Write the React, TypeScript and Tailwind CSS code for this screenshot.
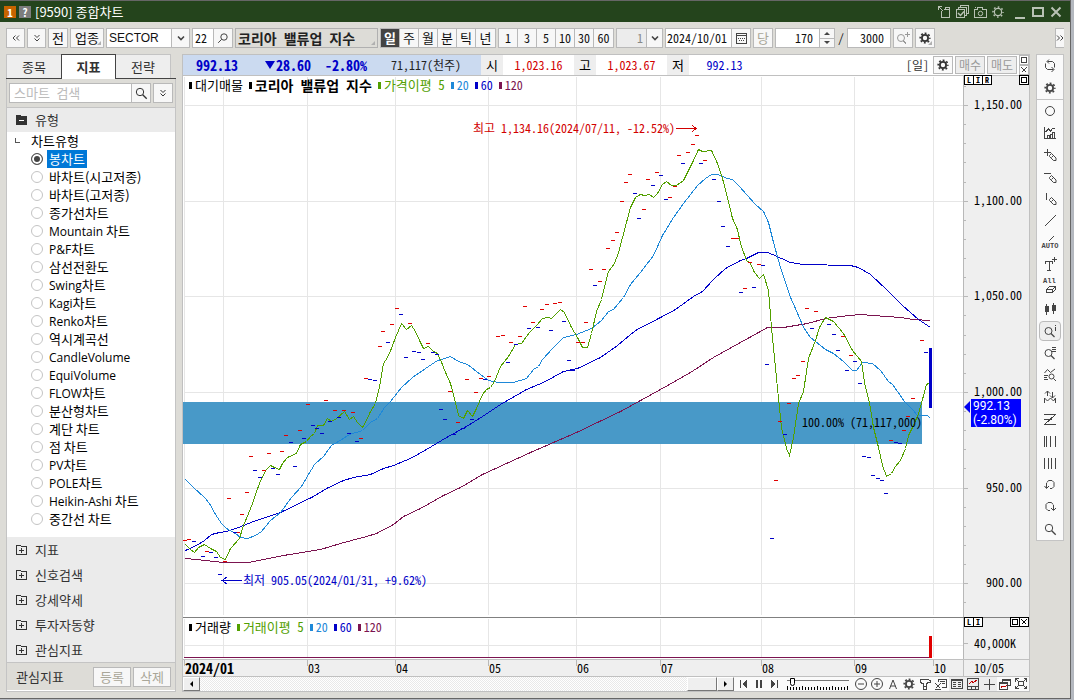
import { useState } from 'react';
import type { ReactNode } from 'react';
import clsx from 'clsx';

type Point = [number, number];

const CHART_TYPES = [
  '봉차트',
  '바차트(시고저종)',
  '바차트(고저종)',
  '종가선차트',
  'Mountain 차트',
  'P&F차트',
  '삼선전환도',
  'Swing차트',
  'Kagi차트',
  'Renko차트',
  '역시계곡선',
  'CandleVolume',
  'EquiVolume',
  'FLOW차트',
  '분산형차트',
  '계단 차트',
  '점 차트',
  'PV차트',
  'POLE차트',
  'Heikin-Ashi 차트',
  '중간선 차트',
];

const GROUPS = ['지표', '신호검색', '강세약세', '투자자동향', '관심지표'];

// Plot area of the price pane, in chart units
const LEFT = 183;
const TOP = 76;
const WIDTH = 780;
const HEIGHT = 541;

const MONTHS = [
  { label: '2024/01', x: 184 },
  { label: '', x: 223 },
  { label: '03', x: 307 },
  { label: '04', x: 395 },
  { label: '05', x: 488 },
  { label: '06', x: 576 },
  { label: '07', x: 660 },
  { label: '08', x: 761 },
  { label: '09', x: 854 },
  { label: '10', x: 933 },
];

const PRICES = [
  { label: '1,150.00', y: 105 },
  { label: '1,100.00', y: 201 },
  { label: '1,050.00', y: 296 },
  { label: '1,000.00', y: 392 },
  { label: '950.00', y: 488 },
  { label: '900.00', y: 583 },
];

const MA5: Point[] = [
  [185, 544], [190, 549], [194, 552], [198, 547], [204, 544], [210, 548], [216, 551], [220, 557], [225, 559],
  [230, 548], [239, 538], [243, 525], [248, 513], [252, 503], [256, 491], [261, 478], [266, 469], [270, 465],
  [274, 467], [279, 469], [282, 463], [287, 457], [296, 453], [300, 444], [306, 441], [310, 436], [314, 433],
  [317, 425], [323, 425], [327, 418], [331, 421], [336, 418], [344, 411], [349, 419], [353, 416], [357, 422],
  [362, 427], [366, 420], [370, 411], [375, 403], [379, 387], [383, 363], [387, 357], [391, 348], [395, 337],
  [401, 323], [406, 329], [411, 325], [415, 331], [419, 340], [423, 348], [428, 346], [433, 351], [436, 352],
  [440, 359], [445, 372], [450, 383], [455, 402], [458, 415], [463, 418], [467, 410], [472, 416], [476, 408],
  [482, 394], [486, 389], [490, 387], [494, 381], [500, 366], [508, 356], [515, 344], [521, 343], [529, 332],
  [537, 324], [542, 318], [548, 317], [551, 318], [560, 309], [564, 312], [571, 327], [577, 337], [582, 347],
  [587, 347], [591, 333], [596, 311], [601, 299], [608, 271], [614, 263], [618, 252], [622, 237], [626, 222],
  [630, 207], [635, 197], [640, 194], [644, 195], [649, 194], [653, 197], [657, 193], [662, 184], [666, 181],
  [671, 185], [676, 185], [683, 180], [688, 170], [693, 160], [698, 149], [702, 151], [711, 150], [717, 163],
  [722, 178], [727, 197], [732, 218], [737, 229], [740, 243], [746, 260], [750, 263], [754, 272], [759, 278],
  [763, 274], [768, 290], [771, 327], [777, 388], [781, 427], [786, 448], [789, 455], [793, 437], [798, 403],
  [803, 391], [808, 358], [815, 340], [819, 327], [825, 317], [833, 321], [843, 333], [852, 350], [861, 361],
  [864, 382], [869, 402], [873, 427], [878, 447], [882, 465], [886, 476], [891, 473], [895, 466], [900, 460],
  [905, 448], [908, 435], [913, 425], [918, 413], [922, 399], [926, 384], [930, 382],
];

const MA20: Point[] = [
  [185, 479], [193, 487], [204, 497], [209, 503], [215, 514], [221, 523], [226, 528], [235, 533], [240, 537],
  [247, 538], [255, 535], [261, 531], [270, 520], [280, 512], [291, 497], [301, 486], [308, 474], [314, 464],
  [323, 456], [331, 445], [338, 441], [349, 434], [362, 430], [370, 422], [377, 418], [384, 407], [390, 401],
  [401, 387], [412, 377], [428, 366], [437, 360], [441, 359], [450, 356], [458, 361], [467, 364], [480, 374],
  [488, 380], [498, 382], [513, 382], [526, 378], [533, 369], [538, 366], [542, 359], [553, 347], [563, 337],
  [576, 334], [591, 328], [601, 320], [608, 311], [613, 309], [623, 297], [630, 284], [640, 272], [653, 255],
  [662, 235], [673, 217], [683, 203], [697, 185], [705, 178], [711, 174], [717, 174], [727, 178], [732, 179],
  [739, 186], [746, 194], [755, 204], [763, 211], [768, 222], [773, 242], [780, 267], [790, 297], [795, 308],
  [803, 327], [810, 337], [815, 341], [825, 349], [833, 353], [843, 361], [852, 370], [856, 370], [862, 362],
  [872, 363], [880, 370], [888, 381], [892, 384], [897, 391], [904, 401], [912, 409], [917, 415], [927, 415],
  [930, 418],
];

const MA60: Point[] = [
  [185, 550], [196, 545], [204, 540], [211, 534], [219, 532], [226, 531], [238, 527], [253, 521], [280, 512],
  [313, 496], [326, 488], [343, 480], [353, 477], [370, 474], [383, 468], [393, 465], [410, 458], [426, 449],
  [446, 437], [466, 426], [482, 416], [500, 404], [526, 389], [543, 382], [563, 371], [577, 368], [600, 357],
  [617, 345], [635, 330], [660, 317], [675, 309], [693, 296], [702, 291], [713, 279], [725, 268], [740, 260],
  [746, 258], [758, 252], [767, 252], [772, 254], [790, 262], [803, 264], [850, 265], [858, 267], [870, 274],
  [887, 290], [902, 305], [918, 319], [930, 327],
];

const MA120: Point[] = [
  [185, 558], [205, 560], [223, 562], [248, 562], [263, 559], [283, 555], [320, 549], [340, 543], [366, 536],
  [376, 533], [393, 524], [403, 516], [420, 508], [443, 495], [460, 487], [482, 474], [530, 452], [576, 432],
  [620, 411], [660, 389], [690, 372], [713, 357], [740, 342], [767, 327], [783, 327], [807, 323], [825, 318],
  [840, 316], [860, 314], [873, 315], [900, 317], [913, 319], [930, 320],
];

const UP: Point[] = [
  [185, 540], [189, 539], [207, 551], [225, 561], [229, 498], [238, 532], [242, 514], [247, 492], [251, 456],
  [269, 453], [264, 470], [282, 451], [286, 435], [300, 430], [308, 404], [326, 400], [335, 410], [344, 410],
  [353, 412], [361, 438], [366, 378], [450, 391], [458, 422], [467, 379], [476, 392], [481, 378], [380, 346],
  [383, 331], [392, 324], [397, 308], [410, 323], [428, 343], [489, 376], [498, 336], [503, 335], [511, 342],
  [520, 336], [525, 306], [533, 322], [542, 309], [547, 304], [555, 303], [560, 302], [578, 342], [583, 342],
  [586, 322], [591, 269], [600, 281], [604, 269], [608, 248], [613, 240], [617, 232], [622, 201], [626, 182],
  [630, 174], [644, 209], [648, 179], [657, 172], [670, 197], [675, 186], [679, 155], [688, 152], [693, 144],
  [697, 135], [705, 160], [733, 238], [737, 238], [745, 288], [750, 262], [759, 264], [807, 308], [816, 311],
  [803, 361], [798, 375], [794, 378], [843, 336], [851, 355], [922, 340], [780, 421], [789, 403], [776, 480],
  [891, 440], [904, 430], [908, 416], [913, 398],
];

const DOWN: Point[] = [
  [194, 541], [203, 556], [211, 552], [216, 557], [220, 574], [235, 532], [255, 470], [260, 477], [273, 468],
  [278, 474], [291, 442], [295, 466], [304, 438], [313, 425], [317, 428], [322, 433], [330, 421], [339, 417],
  [349, 433], [357, 441], [370, 379], [375, 380], [441, 409], [445, 419], [454, 434], [463, 428], [472, 419],
  [388, 342], [401, 314], [406, 357], [414, 351], [419, 352], [423, 359], [433, 352], [437, 354], [485, 379],
  [508, 362], [516, 344], [529, 328], [538, 327], [551, 330], [564, 321], [569, 360], [573, 370], [595, 285],
  [635, 193], [639, 218], [653, 185], [661, 175], [666, 199], [683, 163], [701, 163], [714, 179], [719, 201],
  [723, 226], [728, 246], [741, 292], [754, 287], [763, 265], [767, 364], [812, 328], [829, 324], [834, 334],
  [838, 350], [847, 370], [855, 361], [860, 383], [926, 352], [772, 538], [785, 434], [864, 456], [869, 457],
  [873, 475], [878, 478], [882, 480], [886, 493], [896, 442], [900, 443],
];

const toLine = (points: Point[]) => points.map(([x, y]) => `${x + 0.5},${y + 0.5}`).join(' ');
const toDashes = (points: Point[]) => points.map(([x, y]) => `M${x - 2} ${y + 0.5}h4`).join('');
const left = (x: number) => `${((x - LEFT) / WIDTH) * 100}%`;
const top = (y: number) => `${((y - TOP) / HEIGHT) * 100}%`;

function Icon({ children, smooth }: { children: ReactNode; smooth?: boolean }) {
  return (
    <svg
      viewBox="0 0 16 16"
      className="h-4 w-4 shrink-0"
      fill="none"
      stroke="currentColor"
      strokeWidth="1"
      shapeRendering={smooth ? 'geometricPrecision' : 'crispEdges'}
      aria-hidden="true"
    >
      {children}
    </svg>
  );
}

function GearIcon() {
  return (
    <Icon smooth>
      <circle cx="8" cy="8" r="3.1" strokeWidth="1.8" />
      <circle cx="8" cy="8" r="4.8" strokeWidth="1.6" strokeDasharray="1.9 1.87" strokeDashoffset="0.95" />
    </Icon>
  );
}

function SearchIcon() {
  return (
    <Icon smooth>
      <circle cx="7" cy="7" r="3.7" />
      <path d="M9.7 9.7l4 4" strokeWidth="1.3" />
    </Icon>
  );
}

function ChevronIcon() {
  return (
    <Icon smooth>
      <path d="M5 6.5l3 3 3-3" strokeWidth="1.6" />
    </Icon>
  );
}

const Lens = () => (
  <g shapeRendering="geometricPrecision">
    <circle cx="6.5" cy="8" r="3.5" />
    <path d="M9 10.5l3.5 3.5" strokeWidth="1.3" />
  </g>
);

const Pencil = () => (
  <path d="M7.5 8.5l2-2 4.5 4.5v2.5h-2.5l-4-4v-1zM9.5 10.5l2-2" shapeRendering="geometricPrecision" />
);

const TOOLS: { name: string; icon: ReactNode }[] = [
  {
    name: '새로고침',
    icon: (
      <path
        d="M5.5 3.5h5l2 2v4M3.5 5.5v4l2 2h6M7 1.5l-2 2 2 2M9.5 9l2.5 2.5-2.5 2.5"
        shapeRendering="geometricPrecision"
      />
    ),
  },
  { name: '설정', icon: null },
  { name: '원', icon: <circle cx="8" cy="8" r="4.5" shapeRendering="geometricPrecision" /> },
  {
    name: '지표 차트',
    icon: <path d="M2.5 2v11.5h11M5.5 13v-3h2v3M8.5 13V9.5h1M10.5 13V7.5h2V13M3.5 7l3-3 2 2 2.5-3 2 1" />,
  },
  { name: '십자 그리기', icon: <><path d="M5.5 2v7M2 5.5h7" /><Pencil /></> },
  { name: '수평선 그리기', icon: <><path d="M2 4.5h7" /><Pencil /></> },
  { name: '수직선 그리기', icon: <><path d="M4.5 2v7" /><Pencil /></> },
  { name: '추세선', icon: <path d="M2.5 13.5l11-11" /> },
  { name: '자동 추세선', icon: <path d="M6.5 6.5l5-5" /> },
  { name: '문자', icon: <path d="M3.5 7V4.5h7V7M7 4.5v9M5 13.5h4M12.5 0v5M10 2.5h5" /> },
  { name: '전체 지우기', icon: <path d="M4.5 13.5v-3l3-3h6v3l-3 3h-6zM4.5 10.5h6l3-3M10.5 10.5v3" /> },
  {
    name: '봉 모양',
    icon: (
      <>
        <path d="M4.5 3v11M11.5 2v11" />
        <path d="M3 5h4v6H3zM10 4h4v6h-4z" fill="currentColor" stroke="none" />
      </>
    ),
  },
  { name: '정보 돋보기', icon: <><Lens /><path d="M13.5 2v1M13.5 4v4" /></> },
  { name: '목록 돋보기', icon: <><Lens /><path d="M10 2.5h4M10 4.5h4M10 6.5h4" /></> },
  {
    name: '패턴 검색',
    icon: (
      <g shapeRendering="geometricPrecision">
        <path d="M2.5 6l3-3.5 3 3L13 2M2 8.5h4M2 10.5h3M2 12.5h4M11.5 11.5l2.5 2.5" />
        <circle cx="9.5" cy="9.5" r="2.5" />
      </g>
    ),
  },
  {
    name: '반전',
    icon: (
      <path
        d="M2.5 14V9l3 3 3-3 3 3 2-3v5M5.5 7V2M3 4.5L5.5 2 8 4.5M10.5 3v6M8 6.5L10.5 9 13 6.5"
        shapeRendering="geometricPrecision"
      />
    ),
  },
  { name: '지그재그', icon: <path d="M2 3.5h12M2 13.5h12M2 8.5h8M3 13l10-9" /> },
  { name: '간격선', icon: <path d="M2.5 2.5v11M4.5 2.5v11M8.5 2.5v11M13.5 2.5v11" /> },
  { name: '등간격선', icon: <path d="M2.5 2.5v11M6.5 2.5v11M9.5 2.5v11M13.5 2.5v11" /> },
  {
    name: '되돌리기',
    icon: <path d="M5 5.5l1.5-2h3.5l2 2v4l-2 2H8M4.5 6v5M2.5 9l2 2.5L7 9" shapeRendering="geometricPrecision" />,
  },
  {
    name: '다시하기',
    icon: <path d="M11 5.5l-1.5-2H6l-2 2v4l2 2h2M11.5 6v5M9 9l2.5 2.5L14 9" shapeRendering="geometricPrecision" />,
  },
  { name: '돋보기', icon: null },
];

const BOTTOM_TOOLS: { name: string; icon: ReactNode; on?: boolean }[] = [
  { name: '축소', icon: <g shapeRendering="geometricPrecision"><circle cx="8" cy="8" r="5.5" /><path d="M5 8h6" /></g> },
  { name: '확대', icon: <g shapeRendering="geometricPrecision"><circle cx="8" cy="8" r="5.5" /><path d="M5 8h6M8 5v6" /></g> },
  { name: '글자', icon: <path d="M4.5 13l3.5-9 3.5 9M5.5 10h5" shapeRendering="geometricPrecision" /> },
  { name: '설정', icon: null },
  { name: '망치', icon: <path d="M3.5 6.5v-3h8l2 1.5v1.5h-3v1h-1v6h-3v-6h-2v-1zM6.5 10.5h3" /> },
  {
    name: '데이터 저장',
    icon: <path d="M5.5 6V3.5h8v8h-5M7 5.5h5M9 7.5h3M2.5 7.5l5 5M7.5 7.5l-5 5M2 13.5h6" />,
  },
  {
    name: '표 보기',
    icon: <path d="M2.5 3.5h11v9h-11zM2.5 4.5h11M4 6.5h3M4 8.5h3M4 10.5h3M9 6.5h3M9 8.5h3M9 10.5h3" />,
    on: true,
  },
  {
    name: '분할 차트',
    icon: (
      <>
        <path d="M2.5 2.5h11v11h-11zM2.5 10.5h11M6.5 11v2M10.5 11v2" />
        <path d="M3.5 8.5l3-3 2 1 4-3" stroke="#c00000" />
      </>
    ),
    on: true,
  },
  { name: '십자선', icon: <path d="M8.5 3v11M3 8.5h11" />, on: true },
  {
    name: '겹쳐 보기',
    icon: (
      <>
        <path d="M5.5 6.5v-3h8v6h-3M5.5 4.5h8M2.5 6.5h8v7h-8zM2.5 7.5h8" />
        <path d="M4 11.5l2-1.5 2 1 1.5-1.5" stroke="#c00000" />
      </>
    ),
  },
  {
    name: '전체 화면',
    icon: (
      <path d="M2.5 5.5v-3h3M10.5 2.5h3v3M13.5 9.5v3h-3M5.5 12.5h-3v-3M5.5 5.5h5v4h-5zM3 3l2 2M13 3l-2 2M3 12l2-2M13 12l-2-2" />
    ),
  },
];

const Double = ({ dir }: { dir: 'left' | 'down' | 'right' }) => (
  <Icon smooth>
    {dir === 'left' && <path d="M7.5 5.5L5 8l2.5 2.5M11 5.5L8.5 8l2.5 2.5" />}
    {dir === 'right' && <path d="M5 5.5L7.5 8 5 10.5M8.5 5.5L11 8l-2.5 2.5" />}
    {dir === 'down' && <path d="M5.5 5L8 7.5 10.5 5M5.5 8.5L8 11l2.5-2.5" />}
  </Icon>
);

function BarButton({ label, className, children }: { label?: string; className?: string; children: ReactNode }) {
  return (
    <button
      type="button"
      aria-label={label}
      className={clsx(
        'relative flex h-5 shrink-0 items-center justify-center border border-[#b9b9b9] bg-[#f7f7f7]',
        className,
      )}
    >
      {children}
    </button>
  );
}

const Corner = () => (
  <span className="absolute right-0.5 bottom-0.5 border-b-4 border-l-4 border-b-[#b0b0b0] border-l-transparent" />
);

function TitleBar() {
  return (
    <header className="flex h-[21px] items-center bg-[#24441c] pr-1.5 pl-1 text-white">
      <span className="flex h-3 w-3 items-center justify-center bg-[#c86400] text-[11px] leading-3 font-bold">1</span>
      <span className="ml-[3px] flex h-3 w-3 items-center justify-center bg-[#7d7d7d] text-[11px] leading-3 font-bold">
        ?
      </span>
      <h1 className="ml-1 flex-1 font-['Noto_Sans_CJK_KR',sans-serif] text-[13px] leading-4">[9590] 종합차트</h1>
      <div className="flex items-center gap-0.5 text-[#b9c2b5]">
        <button type="button" aria-label="분리">
          <Icon>
            <path d="M5.5 7v6.5h8v-8H8M9.5 5V3.5h4v2M2 2.5h4M2.5 2v4M3 3l4 4" />
          </Icon>
        </button>
        <button type="button" aria-label="체크">
          <Icon>
            <path d="M2.5 5.5h8v8h-8zM4.5 5V3.5h8v8H11M6.5 3V1.5h8v8H13" />
            <path d="M4 9l2.5 2.5 3.5-4" strokeWidth="1.5" shapeRendering="geometricPrecision" />
          </Icon>
        </button>
        <button type="button" aria-label="화면 저장">
          <Icon>
            <path d="M2.5 5.5h3v-2h5v2h4v8h-12zM3 3.5h1" />
            <circle cx="8.5" cy="9.5" r="2.2" shapeRendering="geometricPrecision" />
          </Icon>
        </button>
        <button type="button" aria-label="환경설정">
          <Icon smooth>
            <circle cx="8" cy="8" r="3.6" strokeWidth="1.2" />
            <circle cx="8" cy="8" r="5" strokeWidth="1.6" strokeDasharray="1.6 2.32" strokeDashoffset="0.8" />
          </Icon>
        </button>
        <button type="button" aria-label="최소화" className="ml-1">
          <Icon>
            <path d="M3 14h10" strokeWidth="2" />
          </Icon>
        </button>
        <button type="button" aria-label="최대화">
          <Icon>
            <path d="M3 4h10v8H3z" strokeWidth="2" />
          </Icon>
        </button>
        <button type="button" aria-label="닫기">
          <Icon smooth>
            <path d="M3.5 3.5l9 9M12.5 3.5l-9 9" strokeWidth="2" />
          </Icon>
        </button>
      </div>
    </header>
  );
}

function Toolbar() {
  const [period, setPeriod] = useState('일');

  return (
    <div className="flex items-center gap-0.5 px-1.5 py-1.5 text-[12px] leading-4 text-[#111]">
      <BarButton label="이전" className="w-[19px] text-[#444]">
        <Double dir="left" />
      </BarButton>
      <BarButton label="펼치기" className="w-[19px] text-[#444]">
        <Double dir="down" />
      </BarButton>
      <BarButton className="w-5 text-[13px]">전</BarButton>
      <BarButton className="w-[34px] text-[13px]">
        업종
        <Corner />
      </BarButton>
      <div className="relative flex h-5 w-[84px] shrink-0 border border-[#b9b9b9] bg-white">
        <select
          aria-label="구분"
          className="w-full appearance-none bg-transparent pl-0.5 font-['Liberation_Sans',sans-serif] text-[12px] leading-4"
        >
          <option>SECTOR</option>
        </select>
        <span className="pointer-events-none absolute inset-y-0 right-0 flex w-[18px] items-center justify-center border-l border-[#b9b9b9] bg-[#f7f7f7] text-[#444]">
          <ChevronIcon />
        </span>
      </div>
      <div className="flex h-5 w-[41px] shrink-0 border border-[#b9b9b9] bg-white">
        <input aria-label="코드" defaultValue="22" className="w-5 min-w-0 flex-1 pl-0.5" />
        <button
          type="button"
          aria-label="찾기"
          className="flex w-[19px] items-center justify-center border-l border-[#b9b9b9] bg-[#f7f7f7] text-[#444]"
        >
          <Icon smooth>
            <circle cx="9" cy="7" r="3.2" />
            <path d="M6.7 9.3l-3.5 3.5" />
          </Icon>
        </button>
      </div>
      <div className="relative h-5 w-[143px] shrink-0 truncate border border-[#b0b0b0] pl-0.5 text-[14px] leading-[18px] font-bold text-[#222]">
        코리아 밸류업 지수
        <Corner />
      </div>
      <div className="flex h-5 shrink-0 divide-x divide-[#b9b9b9] border border-[#b9b9b9] bg-[#f7f7f7]">
        {['일', '주', '월', '분', '틱', '년'].map((p) => (
          <button
            key={p}
            type="button"
            onClick={() => setPeriod(p)}
            className={clsx('w-[19px] text-[13px]', p === period && 'bg-[#444] font-bold text-white')}
          >
            {p}
          </button>
        ))}
      </div>
      <div className="flex h-5 shrink-0 divide-x divide-[#b9b9b9] border border-[#b9b9b9] bg-[#f7f7f7]">
        {['1', '3', '5', '10', '30', '60'].map((n) => (
          <button key={n} type="button" className="w-[19px]">
            {n}
          </button>
        ))}
      </div>
      <div className="relative flex h-5 w-[47px] shrink-0 border border-[#b9b9b9] bg-[#ececec]">
        <select
          aria-label="주기"
          className="w-full appearance-none bg-transparent pl-5 text-[12px] leading-4 text-[#888]"
        >
          <option>1</option>
        </select>
        <span className="pointer-events-none absolute inset-y-0 right-0 flex w-4 items-center justify-center border-l border-[#b9b9b9] bg-[#f7f7f7] text-[#444]">
          <ChevronIcon />
        </span>
      </div>
      <div className="flex h-5 w-[86px] shrink-0 border border-[#b9b9b9] bg-white">
        <input aria-label="날짜" defaultValue="2024/10/01" className="w-5 min-w-0 flex-1 pl-px" />
        <button
          type="button"
          aria-label="달력"
          className="flex w-[19px] items-center justify-center border-l border-[#b9b9b9] bg-[#f7f7f7] text-[#444]"
        >
          <Icon>
            <path d="M3.5 3.5h10v10h-10zM3.5 5.5h10" />
            <path d="M5 8.5h7M6 10.5h5" strokeDasharray="1 1" />
          </Icon>
        </button>
      </div>
      <BarButton className="w-5 text-[13px] text-[#a9a698]">당</BarButton>
      <div className="flex h-5 w-[60px] shrink-0 border border-[#b9b9b9] bg-white">
        <input aria-label="조회 개수" defaultValue="170" className="w-5 min-w-0 flex-1 pr-1.5 text-right" />
        <span className="flex w-[15px] flex-col divide-y divide-[#b9b9b9] border-l border-[#b9b9b9] bg-[#f7f7f7]">
          <button type="button" aria-label="증가" className="flex flex-1 items-center justify-center">
            <span className="border-x-[3px] border-b-[3px] border-x-transparent border-b-[#444]" />
          </button>
          <button type="button" aria-label="감소" className="flex flex-1 items-center justify-center">
            <span className="border-x-[3px] border-t-[3px] border-x-transparent border-t-[#444]" />
          </button>
        </span>
      </div>
      <span className="w-2 text-center">/</span>
      <div className="flex h-5 w-11 shrink-0 border border-[#b9b9b9] bg-white">
        <input aria-label="전체 개수" defaultValue="3000" className="w-5 min-w-0 flex-1 pr-1.5 text-right" />
      </div>
      <BarButton label="확대 조회" className="w-5 text-[#999]">
        <Icon>
          <circle cx="6" cy="8" r="3.5" shapeRendering="geometricPrecision" />
          <path d="M8 10.5l3 3M12.5 2v5M10 4.5h5" />
        </Icon>
      </BarButton>
      <BarButton label="차트 설정" className="w-5 text-[#333]">
        <GearIcon />
        <Corner />
      </BarButton>
      <BarButton label="더보기" className="ml-auto w-[9px] border-r-0 text-[#444]">
        <Double dir="right" />
      </BarButton>
    </div>
  );
}

// Latin names run narrower than the Hangul next to them
function TypeName({ name }: { name: string }) {
  const latin = name.match(/^[A-Za-z&-]+/)?.[0] ?? '';

  return (
    <>
      {latin && <span className="font-['Open_Sans',sans-serif] text-[12px]">{latin}</span>}
      {name.slice(latin.length)}
    </>
  );
}

function Sidebar() {
  const [selected, setSelected] = useState(CHART_TYPES[0]);

  return (
    <aside className="flex w-[170px] shrink-0 flex-col text-[13px] leading-4 text-[#333]">
      <div className="flex h-[25px] border-b border-[#444]">
        <button type="button" className="w-[55px] border-t border-l border-[#c4c4c4] bg-[#eee]">
          종목
        </button>
        <button type="button" className="-mb-px w-[55px] border border-b-0 border-[#444] bg-white font-bold">
          지표
        </button>
        <button type="button" className="w-[55px] border-t border-r border-[#c4c4c4] bg-[#eee]">
          전략
        </button>
      </div>
      <div className="flex flex-1 flex-col border-x border-b border-[#c4c4c4]">
        <div className="flex gap-0.5 border-b border-[#c4c4c4] px-0.5 py-1">
          <div className="flex h-5 flex-1 border border-[#b9b9b9] bg-white">
            <input
              aria-label="스마트 검색"
              placeholder="스마트 검색"
              className="w-5 min-w-0 flex-1 pl-1 placeholder:text-[#bbb]"
            />
            <button
              type="button"
              aria-label="검색"
              className="flex w-[19px] items-center justify-center border-l border-[#b9b9b9] bg-[#f7f7f7]"
            >
              <SearchIcon />
            </button>
          </div>
          <BarButton label="펼치기" className="w-5">
            <Double dir="down" />
          </BarButton>
        </div>
        <button type="button" className="flex h-6 items-center bg-[#ebebeb] pl-2 text-left">
          <Icon>
            <path d="M1 3h4l1 1h6v9H1z" fill="currentColor" stroke="none" />
            <path d="M4 8.5h5" stroke="#fff" />
          </Icon>
          <span className="ml-1">유형</span>
        </button>
        <fieldset className="flex-1 bg-white font-['Noto_Sans_CJK_KR',sans-serif] leading-[18px] text-black">
          <div className="flex h-[18px] items-center pl-2">
            <span className="mb-0.5 h-[5px] w-[5px] border-b border-l border-[#555]" />
            <span className="ml-[11px]">차트유형</span>
          </div>
          {CHART_TYPES.map((type) => (
            <label key={type} className="flex h-[18px] items-center pl-6">
              <input
                type="radio"
                name="chart-type"
                checked={type === selected}
                onChange={() => setSelected(type)}
                className="h-3 w-3 appearance-none rounded-full border border-[#c4c4c4] bg-white checked:border-[#555] checked:bg-[#444] checked:shadow-[inset_0_0_0_2px_#fff]"
              />
              <span className={clsx('ml-1 px-0.5', type === selected && 'bg-[#0078d7] text-white')}>
                <TypeName name={type} />
              </span>
            </label>
          ))}
        </fieldset>
        <div className="flex flex-col bg-[#ebebeb]">
          {GROUPS.map((group) => (
            <button key={group} type="button" className="flex h-[25px] items-center pl-2 text-left">
              <Icon>
                <path d="M1.5 12.5v-9h4l1 1h5v8zM4 8.5h5M6.5 6v5" />
              </Icon>
              <span className="ml-1">{group}</span>
            </button>
          ))}
        </div>
        <div className="flex items-center gap-0.5 border-t border-b border-t-[#c4c4c4] border-b-white pt-1 pr-1 pb-[3px] pl-[9px]">
          <span className="flex-1">관심지표</span>
          <BarButton className="w-[38px] text-[#a9a698]">등록</BarButton>
          <BarButton className="w-[38px] text-[#a9a698]">삭제</BarButton>
        </div>
      </div>
    </aside>
  );
}

function Quote({ label, value, className }: { label: string; value: string; className: string }) {
  return (
    <>
      <dt className="flex w-[22px] items-center justify-center bg-[#eee] text-[13px]">{label}</dt>
      <dd className={clsx('flex w-[71px] items-center justify-center', className)}>{value}</dd>
    </>
  );
}

function InfoBar() {
  return (
    <div className="flex h-[21px] border-b border-[#c0c0c0] text-[12px] leading-4">
      <div className="flex w-[298px] items-center bg-[#cbdaf0] pl-[13px]">
        <span className="flex-1 text-[14px] font-bold text-[#0000c8]">992.13</span>
        <span className="mr-3.5 flex items-center text-[14px] font-bold text-[#0000c8]">
          <span className="mr-px border-x-[5px] border-t-8 border-x-transparent border-t-[#0000c8]" />
          28.60
        </span>
        <span className="mr-6 text-[14px] font-bold text-[#0000c8]">-2.80%</span>
        <span className="mr-5 text-[#222]">71,117(천주)</span>
      </div>
      <dl className="flex flex-1">
        <Quote label="시" value="1,023.16" className="text-[#d20000]" />
        <Quote label="고" value="1,023.67" className="text-[#d20000]" />
        <Quote label="저" value="992.13" className="text-[#0000c8]" />
      </dl>
      <div className="flex items-center gap-0.5 text-[#333]">
        <span className="mr-0.5">[일]</span>
        <button
          type="button"
          aria-label="종목 설정"
          className="flex h-[18px] w-5 items-center justify-center border border-[#b9b9b9] bg-[#fafafa]"
        >
          <GearIcon />
        </button>
        <button type="button" className="h-[18px] w-[30px] border border-[#b9b9b9] bg-[#eee] text-[#999]">
          매수
        </button>
        <button type="button" className="h-[18px] w-[30px] border border-[#b9b9b9] bg-[#eee] text-[#999]">
          매도
        </button>
        <span className="flex flex-col text-[#444]">
          <PaneButton kind="max" className="border-[#b9b9b9]" />
          <PaneButton kind="close" className="border-[#b9b9b9]" />
        </span>
      </div>
    </div>
  );
}

function PaneButton({ kind, className = 'border-black' }: { kind: 'max' | 'close'; className?: string }) {
  return (
    <button
      type="button"
      aria-label={kind === 'max' ? '최대화' : '닫기'}
      className={clsx('flex h-[10px] w-[10px] items-center justify-center border bg-white', className)}
    >
      <svg viewBox="0 0 8 8" className="h-2 w-2" fill="none" stroke="currentColor" shapeRendering="crispEdges">
        {kind === 'max' ? <path d="M1.5 1.5h5v5h-5z" /> : <path d="M1.5 1.5l5 5M6.5 1.5l-5 5" />}
      </svg>
    </button>
  );
}

function PaneLetters({ letters }: { letters: string[] }) {
  return (
    <div className="flex">
      {letters.map((letter) => (
        <button
          key={letter}
          type="button"
          className="-mr-px flex h-[10px] w-[10px] items-center justify-center border border-black bg-white text-[8px] leading-none font-bold"
        >
          {letter}
        </button>
      ))}
    </div>
  );
}

function Legend({ items }: { items: { text: string; color: string; mark: string; size?: string }[] }) {
  return (
    <ul className="relative flex w-fit gap-1.5 pl-1.5 text-[12px] leading-4">
      {items.map((item) => (
        <li key={item.text} className={clsx('flex items-center gap-[3px]', item.color)}>
          <span className={clsx('h-[7px] w-[3px]', item.mark)} />
          <span className={clsx('whitespace-pre', item.size)}>{item.text}</span>
        </li>
      ))}
    </ul>
  );
}

const AVERAGES = [
  { text: '20', color: 'text-[#1e88d8]', mark: 'bg-[#1e88d8]' },
  { text: '60', color: 'text-[#0000c8]', mark: 'bg-[#0000c8]' },
  { text: '120', color: 'text-[#7b1450]', mark: 'bg-[#7b1450]' },
];

function PricePlot() {
  return (
    <div className="relative min-w-0 flex-1 bg-white pt-px text-[12px] leading-4">
      <svg
        viewBox={`${LEFT} ${TOP} ${WIDTH} ${HEIGHT}`}
        preserveAspectRatio="none"
        className="absolute inset-0 h-full w-full"
        fill="none"
        shapeRendering="crispEdges"
        role="img"
        aria-label="코리아 밸류업 지수 일봉 차트"
      >
        <g stroke="#e6e6e6">
          {MONTHS.map((m) => (
            <path key={m.x} d={`M${m.x + 0.5} 77V615`} />
          ))}
          {PRICES.map((p) => (
            <path key={p.y} d={`M184 ${p.y + 0.5}H963`} />
          ))}
        </g>
        <rect x="183" y="402" width="739" height="42" fill="#4899c8" />
        <polyline points={toLine(MA120)} stroke="#7b1450" />
        <polyline points={toLine(MA60)} stroke="#0000c8" />
        <polyline points={toLine(MA20)} stroke="#1e88d8" />
        <polyline points={toLine(MA5)} stroke="#52a000" />
        <path d={toDashes(UP)} stroke="#e00000" />
        <path d={toDashes(DOWN)} stroke="#0000c8" />
        <rect x="929" y="348" width="3" height="60" fill="#0000c8" />
        <path d="M676 128.5h20M692 125l4 3.5-4 3.5" stroke="#d20000" />
        <path d="M222 580.5h20M227 577l-5 3.5 5 3.5" stroke="#0000c8" />
      </svg>
      <Legend
        items={[
          { text: '대기매물', color: 'text-black', mark: 'bg-black', size: 'text-[13px]' },
          { text: '코리아 밸류업 지수', color: 'text-black', mark: 'bg-black', size: 'text-[14px] font-bold' },
          { text: '가격이평 5', color: 'text-[#52a000]', mark: 'bg-[#52a000]', size: 'text-[13px]' },
          ...AVERAGES,
        ]}
      />
      <span
        className="absolute -translate-x-full -translate-y-1/2 whitespace-nowrap text-[#d20000]"
        style={{ left: left(675), top: top(128) }}
      >
        최고 1,134.16(2024/07/11, -12.52%)
      </span>
      <span
        className="absolute -translate-y-1/2 whitespace-nowrap text-[#0000c8]"
        style={{ left: left(243), top: top(580) }}
      >
        최저 905.05(2024/01/31, +9.62%)
      </span>
      <span
        className="absolute -translate-x-full -translate-y-1/2 whitespace-nowrap text-black"
        style={{ left: left(922), top: top(422) }}
      >
        100.00% (71,117,000)
      </span>
    </div>
  );
}

function PriceAxis() {
  const ticks = Array.from({ length: 28 }, (_, i) => 86 + i * 19.12);

  return (
    <div className="relative w-[66px] shrink-0 border-l border-[#b8b8b8] bg-[#efefef] text-[12px] leading-[14px]">
      <svg
        viewBox={`0 ${TOP} 65 ${HEIGHT}`}
        preserveAspectRatio="none"
        className="absolute inset-0 h-full w-full"
        stroke="#b8b8b8"
        shapeRendering="crispEdges"
        aria-hidden="true"
      >
        {ticks.map((y) => (
          <path key={y} d={`M0 ${Math.round(y) + 0.5}h2`} />
        ))}
        {PRICES.map((p) => (
          <path key={p.y} d={`M0 ${p.y + 0.5}h4`} />
        ))}
      </svg>
      <div className="relative -mt-px flex justify-between">
        <PaneLetters letters={['L', 'I', 'R']} />
        <PaneButton kind="max" />
      </div>
      {PRICES.map((p) => (
        <span
          key={p.label}
          className="absolute right-[7px] -translate-y-2 text-black"
          style={{ top: top(p.y) }}
        >
          {p.label}
        </span>
      ))}
      <div className="absolute right-2 left-0 flex -translate-y-2 items-start" style={{ top: top(407) }}>
        <span className="mt-0.5 mr-px border-y-[6px] border-r-[6px] border-y-transparent border-r-[#0000f0]" />
        <span className="flex flex-1 flex-col bg-[#0000ff] pl-0.5 font-['Roboto',sans-serif] text-[12px] leading-[14px] text-white">
          <span>992.13</span>
          <span>(-2.80%)</span>
        </span>
      </div>
    </div>
  );
}

function VolumePane() {
  return (
    <div className="flex h-[42px] border-t border-[#808080]">
      <div className="relative min-w-0 flex-1 bg-white pt-px">
        <svg
          viewBox="183 618 780 41"
          preserveAspectRatio="none"
          className="absolute inset-0 h-full w-full"
          fill="none"
          shapeRendering="crispEdges"
          role="img"
          aria-label="거래량 차트"
        >
          <g stroke="#e6e6e6">
            {MONTHS.map((m) => (
              <path key={m.x} d={`M${m.x + 0.5} 619V657`} />
            ))}
            <path d="M184 645.5H963" />
          </g>
          <path d="M184 657.5H929" stroke="#7b1450" />
          <rect x="929" y="636" width="3" height="22" fill="#e00000" />
        </svg>
        <Legend
          items={[
            { text: '거래량', color: 'text-black', mark: 'bg-black', size: 'text-[13px]' },
            { text: '거래이평 5', color: 'text-[#52a000]', mark: 'bg-[#52a000]', size: 'text-[13px]' },
            ...AVERAGES,
          ]}
        />
      </div>
      <div className="w-[66px] shrink-0 border-l border-[#b8b8b8] bg-[#efefef] text-[12px] leading-4">
        <div className="-mt-px flex justify-between">
          <PaneLetters letters={['L', 'I']} />
          <span className="flex">
            <PaneButton kind="max" className="-mr-px border-black" />
            <PaneButton kind="close" />
          </span>
        </div>
        <div className="mt-2 flex items-center">
          <span className="h-px w-1 bg-[#b8b8b8]" />
          <span className="ml-1.5">40,000K</span>
        </div>
      </div>
    </div>
  );
}

function TimeAxis() {
  return (
    <div className="flex h-[18px] border-y border-[#c0c0c0] bg-[#efefef] text-[12px] leading-4 text-black">
      <div className="relative min-w-0 flex-1">
        {MONTHS.filter((m) => m.label).map((m) => (
          <span key={m.x} className="absolute top-0 flex" style={{ left: left(m.x) }}>
            <span className="h-1.5 w-px bg-[#b8b8b8]" />
            <span className={clsx(m.label.length > 2 && 'text-[14px] font-bold')}>{m.label}</span>
          </span>
        ))}
      </div>
      <div className="w-[66px] border-l border-[#c0c0c0] pl-2.5">10/05</div>
    </div>
  );
}

function ScrollRow() {
  const raised =
    'flex h-[14px] shrink-0 items-center justify-center border border-t-white border-r-[#777] border-b-[#777] border-l-white bg-[#efefef]';

  return (
    <div className="flex h-[14px] items-center bg-[#fafafa] text-[#444]">
      <button type="button" aria-label="왼쪽으로" className={clsx(raised, 'w-[17px]')}>
        <span className="border-y-[3px] border-r-[3px] border-y-transparent border-r-black" />
      </button>
      <div className="flex h-full flex-1 justify-end bg-[repeating-conic-gradient(#e9e9e9_0_25%,#ffffff_0_50%)] bg-size-[2px_2px]">
        <span className={clsx(raised, 'w-[30px]')} />
      </div>
      <button type="button" aria-label="오른쪽으로" className={clsx(raised, 'w-[17px]')}>
        <span className="border-y-[3px] border-l-[3px] border-y-transparent border-l-black" />
      </button>
      <div className="ml-px flex">
        <button type="button" aria-label="처음">
          <Icon>
            <path d="M5.5 4v8" />
            <path d="M12 4v8L7 8z" fill="currentColor" stroke="none" />
          </Icon>
        </button>
        <button type="button" aria-label="일시정지">
          <Icon>
            <path d="M6 4v8M10 4v8" strokeWidth="2" />
          </Icon>
        </button>
        <button type="button" aria-label="끝">
          <Icon>
            <path d="M10.5 4v8" />
            <path d="M4 4v8l5-4z" fill="currentColor" stroke="none" />
          </Icon>
        </button>
      </div>
      <div className="mx-1 flex w-[62px] flex-col">
        <input
          type="range"
          aria-label="재생 속도"
          min={0}
          max={20}
          defaultValue={1}
          className="h-2 w-full appearance-none bg-[linear-gradient(#777,#777)] bg-[length:100%_1px] bg-[position:0_2px] bg-no-repeat [&::-webkit-slider-thumb]:h-2 [&::-webkit-slider-thumb]:w-[5px] [&::-webkit-slider-thumb]:appearance-none [&::-webkit-slider-thumb]:rounded-b-full [&::-webkit-slider-thumb]:border [&::-webkit-slider-thumb]:border-black [&::-webkit-slider-thumb]:bg-white"
        />
        <svg viewBox="0 0 62 4" className="h-1 w-full" stroke="#000" shapeRendering="crispEdges" aria-hidden="true">
          <path d="M0 2.5H62" strokeWidth="3" strokeDasharray="1 2" />
          <path d="M0.5 0v4M15.5 0v4M30.5 0v4M45.5 0v4M60.5 0v4" />
        </svg>
      </div>
      <div className="flex">
        {BOTTOM_TOOLS.map((tool) => (
          <button
            key={tool.name}
            type="button"
            aria-label={tool.name}
            className={clsx('flex h-[14px] w-4 items-center justify-center', tool.on && 'bg-[#ececec]')}
          >
            {tool.icon ? <Icon>{tool.icon}</Icon> : <GearIcon />}
          </button>
        ))}
      </div>
    </div>
  );
}

function ToolColumn() {
  return (
    <nav className="flex w-7 shrink-0 flex-col items-center self-start border border-[#c4c4c4] bg-[#fafafa] text-[#444]">
      {TOOLS.map((tool, i) => (
        <button
          key={tool.name}
          type="button"
          aria-label={tool.name}
          className={clsx(
            'relative flex w-full items-center justify-center',
            i === 1 ? 'h-[23px] border-b border-[#c4c4c4]' : 'h-[22px]',
          )}
        >
          {tool.name === '정보 돋보기' && (
            <span className="absolute inset-x-0.5 inset-y-px rounded-sm border border-[#bbb] bg-[#eee]" />
          )}
          <span className="relative flex">
            {i === 1 && <GearIcon />}
            {i === TOOLS.length - 1 && <SearchIcon />}
            {tool.icon && <Icon>{tool.icon}</Icon>}
          </span>
          {tool.name === '자동 추세선' && (
            <span className="absolute inset-x-0 bottom-1 text-center font-['Liberation_Mono',monospace] text-[7px] leading-[7px] font-bold">
              AUTO
            </span>
          )}
          {tool.name === '전체 지우기' && (
            <span className="absolute top-0.5 left-1.5 font-['Liberation_Mono',monospace] text-[7px] leading-[7px] font-bold">
              All
            </span>
          )}
        </button>
      ))}
    </nav>
  );
}

export default function App() {
  return (
    <div className="min-h-screen bg-[#b4b8bf] pr-[3px] pb-px font-['Noto_Sans_Mono_CJK_KR','Noto_Sans_CJK_KR',monospace]">
      <div className="flex min-h-[calc(100vh-1px)] flex-col border-t border-r border-b border-[#666] bg-[#dddcd7]">
        <TitleBar />
        <Toolbar />
        <main className="flex flex-1 gap-1.5 px-1.5 pb-1.5">
          <Sidebar />
          <section className="flex min-w-0 flex-1 flex-col border border-[#c0c0c0] bg-white">
            <InfoBar />
            <div className="flex min-h-80 flex-1">
              <PricePlot />
              <PriceAxis />
            </div>
            <VolumePane />
            <TimeAxis />
            <ScrollRow />
          </section>
          <ToolColumn />
        </main>
      </div>
    </div>
  );
}
